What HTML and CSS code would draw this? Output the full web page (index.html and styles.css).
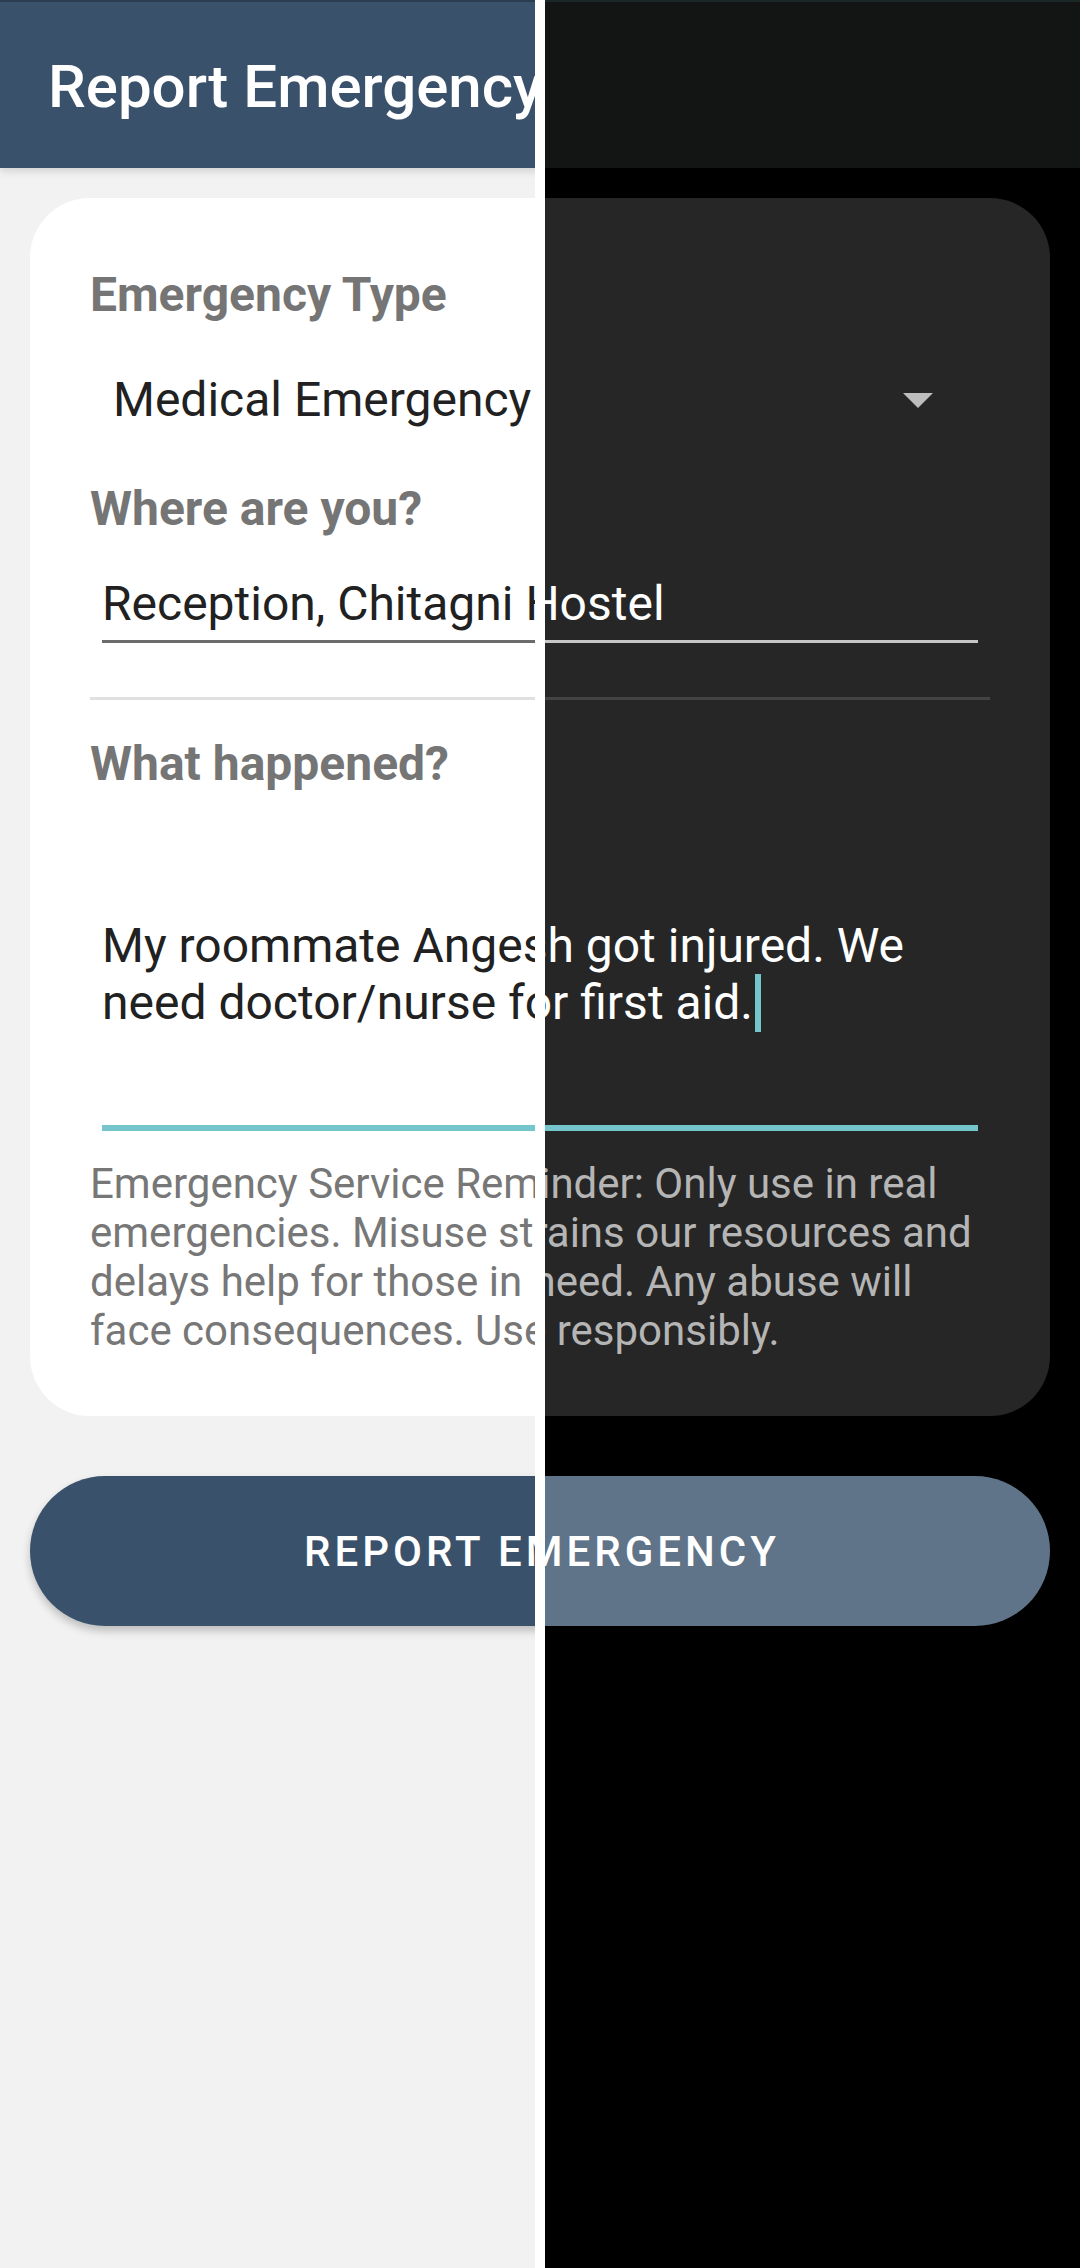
FILE: index.html
```html
<!DOCTYPE html>
<html lang="en">
<head>
<meta charset="utf-8">
<title>Report Emergency</title>
<link rel="stylesheet" href="styles.css">
</head>
<body>
<div class="compare">
  <div class="screen light">
    <header class="appbar"><h1 class="appbar-title">Report Emergency</h1></header>
    <main class="content">
      <section class="card">
        <h2 class="label">Emergency Type</h2>
        <div class="spinner">
          <span class="spinner-value">Medical Emergency</span>
          <svg class="spinner-arrow" width="30" height="15" viewBox="0 0 30 15"><path d="M0 0H30L15 15Z" fill="currentColor"/></svg>
        </div>
        <h2 class="label">Where are you?</h2>
        <div class="input input-location">Reception, Chitagni Hostel</div>
        <hr class="divider">
        <h2 class="label label-gap">What happened?</h2>
        <div class="input input-multi">My roommate Angesh got injured. We<br>need doctor/nurse for first aid.<span class="cursor"></span></div>
        <p class="reminder">Emergency Service Reminder: Only use in real<br>emergencies. Misuse strains our resources and<br>delays help for those in need. Any abuse will<br>face consequences. Use responsibly.</p>
      </section>
      <button class="report-btn" type="button">Report Emergency</button>
    </main>
  </div>
  <div class="screen dark">
    <header class="appbar"><h1 class="appbar-title">Report Emergency</h1></header>
    <main class="content">
      <section class="card">
        <h2 class="label">Emergency Type</h2>
        <div class="spinner">
          <span class="spinner-value">Medical Emergency</span>
          <svg class="spinner-arrow" width="30" height="15" viewBox="0 0 30 15"><path d="M0 0H30L15 15Z" fill="currentColor"/></svg>
        </div>
        <h2 class="label">Where are you?</h2>
        <div class="input input-location">Reception, Chitagni Hostel</div>
        <hr class="divider">
        <h2 class="label label-gap">What happened?</h2>
        <div class="input input-multi">My roommate Angesh got injured. We<br>need doctor/nurse for first aid.<span class="cursor"></span></div>
        <p class="reminder">Emergency Service Reminder: Only use in real<br>emergencies. Misuse strains our resources and<br>delays help for those in need. Any abuse will<br>face consequences. Use responsibly.</p>
      </section>
      <button class="report-btn" type="button">Report Emergency</button>
    </main>
  </div>
</div>
</body>
</html>
```

FILE: styles.css
```css
* { box-sizing: border-box; }

html, body {
  margin: 0;
  padding: 0;
  background: #ffffff;
}

body {
  font-family: Roboto, "Noto Sans", "Liberation Sans", sans-serif;
}

.compare {
  display: grid;
  width: 1080px;
  height: 2268px;
  overflow: hidden;
  background: #ffffff;
}

.screen {
  grid-area: 1 / 1;
  width: 1080px;
  height: 2268px;
  display: flex;
  flex-direction: column;
}

/* ---------- light theme ---------- */
.light {
  clip-path: inset(0 545px 0 0);
  background: #f2f2f2;
  --bar: #3a516b;
  --bar-edge: #2b3d51;
  --bar-shadow: 0 3px 8px rgba(0, 0, 0, 0.14);
  --card: #ffffff;
  --label: #757575;
  --text: #212121;
  --arrow: #757575;
  --line: #6b6b6b;
  --divider: #e0e0e0;
  --hint: #777777;
  --btn: #3a516b;
  --btn-shadow: 0 5px 8px rgba(0, 0, 0, 0.22);
}

/* ---------- dark theme ---------- */
.dark {
  clip-path: inset(0 0 0 545px);
  background: #000000;
  --bar: #131514;
  --bar-edge: #1b2828;
  --bar-shadow: none;
  --card: #262626;
  --label: #9e9e9e;
  --text: #ffffff;
  --arrow: #bdbdbd;
  --line: #c6c6c6;
  --divider: #434343;
  --hint: #b5b5b5;
  --btn: #607489;
  --btn-shadow: none;
}

/* ---------- app bar ---------- */
.appbar {
  height: 168px;
  flex: none;
  background: var(--bar);
  border-top: 2px solid var(--bar-edge);
  padding: 50px 48px 0;
  box-shadow: var(--bar-shadow);
}

.appbar-title {
  margin: 0;
  font-size: 60px;
  line-height: 70px;
  font-weight: 500;
  color: #ffffff;
  white-space: nowrap;
}

/* ---------- content ---------- */
.content {
  padding: 30px;
  display: flex;
  flex-direction: column;
}

.card {
  background: var(--card);
  border-radius: 60px;
  padding: 69px 60px 61px;
  display: flex;
  flex-direction: column;
}

.label {
  margin: 0;
  font-size: 48px;
  line-height: 56px;
  font-weight: 700;
  color: var(--label);
  white-space: nowrap;
}

.label-gap {
  margin-top: 36px;
}

.spinner {
  display: flex;
  align-items: center;
  justify-content: space-between;
  padding: 49px 57px 53px 23px;
}

.spinner-value {
  font-size: 48px;
  line-height: 56px;
  color: var(--text);
  white-space: nowrap;
}

.spinner-arrow {
  display: block;
  color: var(--arrow);
}

.input {
  margin: 0 12px;
  font-size: 48px;
  line-height: 56px;
  color: var(--text);
  white-space: nowrap;
}

.input-location {
  padding: 39px 0 8px;
  border-bottom: 3px solid var(--line);
}

.divider {
  margin: 54px 0 0;
  height: 3px;
  border: 0;
  background: var(--divider);
}

.input-multi {
  line-height: 57px;
  padding: 125px 0 93px;
  border-bottom: 6px solid #75c6cc;
}

.cursor {
  display: inline-block;
  width: 6px;
  height: 58px;
  margin-left: 2px;
  vertical-align: top;
  background: #75c6cc;
}

.reminder {
  margin: 28px 0 0;
  font-size: 42px;
  line-height: 49px;
  color: var(--hint);
  white-space: nowrap;
}

.report-btn {
  margin-top: 60px;
  height: 150px;
  border: 0;
  border-radius: 75px;
  background: var(--btn);
  box-shadow: var(--btn-shadow);
  color: #ffffff;
  font-family: Roboto, "Noto Sans", "Liberation Sans", sans-serif;
  font-size: 42px;
  font-weight: 500;
  letter-spacing: 4px;
  text-indent: 4px;
  text-transform: uppercase;
  padding: 0;
}
```
